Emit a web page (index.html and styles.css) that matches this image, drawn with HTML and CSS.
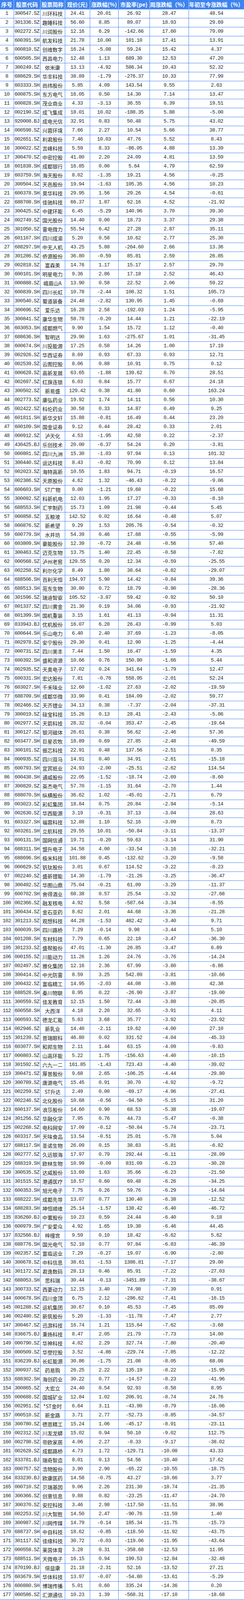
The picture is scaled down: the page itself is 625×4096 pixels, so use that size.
FILE: index.html
```html
<!DOCTYPE html>
<html lang="zh-CN">
<head>
<meta charset="utf-8">
<title>四川板块股票周涨跌幅</title>
<link rel="stylesheet" href="styles.css">
</head>
<body>
<table class="t">
<colgroup><col class="c1"><col class="c2"><col class="c3"><col class="c4"><col class="c5"><col class="c6"><col class="c7"><col class="c8"></colgroup>
<thead>
<tr class="hd"><th>序号</th><th>股票代码</th><th>股票简称</th><th>现价(元)</th><th>涨跌幅(%)</th><th>市盈率(pe)</th><th>周涨跌幅（%）</th><th>年初至今涨跌幅（%）</th></tr>
</thead>
<tbody>
<tr><td>1<td>300547.SZ<td class="n">川环科技<td>24.41<td>20.01<td>26.92<td>28.47<td>48.54
<tr><td>2<td>301336.SZ<td class="n">趣睡科技<td>56.60<td>8.85<td>89.07<td>18.93<td>29.69
<tr><td>3<td>002272.SZ<td class="n">川润股份<td>12.16<td>6.29<td>-142.66<td>17.60<td>79.09
<tr><td>4<td>600391.SH<td class="n">航发科技<td>21.78<td>10.00<td>101.10<td>17.41<td>13.91
<tr><td>5<td>000810.SZ<td class="n">创维数字<td>16.24<td>-5.08<td>59.24<td>15.42<td>4.37
<tr><td>6<td>600505.SH<td class="n">西昌电力<td>12.48<td>1.13<td>689.30<td>12.53<td>47.20
<tr><td>7<td>300249.SZ<td class="n">依米康<td>13.13<td>-4.92<td>586.34<td>10.43<td>52.32
<tr><td>8<td>688629.SH<td class="n">华丰科技<td>38.89<td>-1.79<td>-276.37<td>10.33<td>77.99
<tr><td>9<td>603333.SH<td class="n">尚纬股份<td>5.85<td>4.09<td>143.54<td>9.55<td>2.63
<tr><td>10<td>600875.SH<td class="n">东方电气<td>16.05<td>0.50<td>14.30<td>7.14<td>13.47
<tr><td>11<td>600828.SH<td class="n">茂业商业<td>4.33<td>-3.13<td>36.55<td>6.39<td>19.51
<tr><td>12<td>002190.SZ<td class="n">成飞集成<td>18.01<td>10.02<td>-188.35<td>5.88<td>-5.00
<tr><td>13<td>920008.BJ<td class="n">成电光信<td>32.91<td>0.83<td>50.48<td>5.75<td>43.02
<tr><td>14<td>000598.SZ<td class="n">兴蓉环境<td>7.66<td>2.27<td>10.54<td>5.66<td>38.77
<tr><td>15<td>002651.SZ<td class="n">利君股份<td>7.46<td>10.03<td>47.76<td>5.52<td>8.43
<tr><td>16<td>300022.SZ<td class="n">吉峰科技<td>5.59<td>8.33<td>-86.05<td>4.88<td>13.39
<tr><td>17<td>300470.SZ<td class="n">中密控股<td>41.80<td>2.20<td>24.09<td>4.81<td>13.59
<tr><td>18<td>601838.SH<td class="n">成都银行<td>16.85<td>0.00<td>5.64<td>4.79<td>62.59
<tr><td>19<td>603759.SH<td class="n">海天股份<td>8.02<td>-1.35<td>19.21<td>4.56<td>-0.25
<tr><td>20<td>300504.SZ<td class="n">天邑股份<td>19.94<td>-1.63<td>105.35<td>4.56<td>10.23
<tr><td>21<td>600378.SH<td class="n">昊华科技<td>29.95<td>1.56<td>29.26<td>4.54<td>-0.61
<tr><td>22<td>688708.SH<td class="n">佳驰科技<td>66.37<td>1.87<td>62.16<td>4.52<td>-21.92
<tr><td>23<td>300425.SZ<td class="n">中建环能<td>6.45<td>-5.29<td>140.96<td>3.70<td>39.30
<tr><td>24<td>002749.SZ<td class="n">国光股份<td>14.40<td>0.00<td>18.73<td>3.37<td>29.38
<tr><td>25<td>301050.SZ<td class="n">雷电微力<td>55.54<td>6.42<td>27.28<td>2.87<td>35.11
<tr><td>26<td>601107.SH<td class="n">四川成渝<td>5.20<td>0.58<td>10.62<td>2.77<td>25.30
<tr><td>27<td>688297.SH<td class="n">中无人机<td>43.25<td>5.88<td>-264.60<td>2.66<td>13.36
<tr><td>28<td>301286.SZ<td class="n">侨源股份<td>36.80<td>-0.59<td>85.81<td>2.59<td>26.85
<tr><td>29<td>002818.SZ<td class="n">富森美<td>14.76<td>1.17<td>15.17<td>2.57<td>29.70
<tr><td>30<td>600101.SH<td class="n">明星电力<td>9.36<td>2.86<td>17.18<td>2.52<td>46.43
<tr><td>31<td>000888.SZ<td class="n">峨眉山A<td>13.90<td>0.58<td>22.52<td>2.06<td>59.22
<tr><td>32<td>600839.SH<td class="n">四川长虹<td>10.78<td>-2.44<td>108.32<td>1.51<td>105.73
<tr><td>33<td>300540.SZ<td class="n">蜀道装备<td>24.48<td>-2.82<td>130.95<td>1.45<td>-0.69
<tr><td>34<td>300696.SZ<td class="n">爱乐达<td>16.28<td>2.58<td>-192.03<td>1.24<td>-5.95
<tr><td>35<td>300841.SZ<td class="n">康华生物<td>58.78<td>-0.20<td>14.44<td>1.21<td>-22.19
<tr><td>36<td>603053.SH<td class="n">成都燃气<td>9.90<td>1.54<td>15.72<td>1.12<td>-0.40
<tr><td>37<td>688636.SH<td class="n">智明达<td>29.90<td>1.63<td>-275.67<td>1.01<td>-31.45
<tr><td>38<td>600674.SH<td class="n">川投能源<td>17.25<td>0.58<td>14.26<td>1.00<td>17.19
<tr><td>39<td>002926.SZ<td class="n">华西证券<td>8.69<td>0.93<td>67.33<td>0.93<td>12.71
<tr><td>40<td>002539.SZ<td class="n">云图控股<td>8.06<td>0.88<td>10.91<td>0.75<td>0.12
<tr><td>41<td>000628.SZ<td class="n">高新发展<td>63.65<td>-1.88<td>139.62<td>0.70<td>28.51
<tr><td>42<td>002697.SZ<td class="n">红旗连锁<td>6.03<td>0.84<td>15.77<td>0.67<td>24.18
<tr><td>43<td>300502.SZ<td class="n">新易盛<td>129.42<td>0.38<td>41.80<td>0.60<td>163.24
<tr><td>44<td>002773.SZ<td class="n">康弘药业<td>19.92<td>1.74<td>14.11<td>0.56<td>10.30
<tr><td>45<td>002422.SZ<td class="n">科伦药业<td>30.58<td>0.33<td>14.87<td>0.49<td>9.25
<tr><td>46<td>601811.SH<td class="n">新华文轩<td>15.88<td>-0.81<td>16.49<td>0.44<td>23.20
<tr><td>47<td>600109.SH<td class="n">国金证券<td>9.12<td>0.44<td>28.42<td>0.33<td>2.01
<tr><td>48<td>000912.SZ<td class="n">泸天化<td>4.53<td>-1.95<td>42.58<td>0.22<td>-2.37
<tr><td>49<td>430425.BJ<td class="n">乐创技术<td>20.00<td>-6.37<td>54.24<td>0.20<td>-3.81
<tr><td>50<td>000801.SZ<td class="n">四川九洲<td>15.30<td>-1.03<td>97.94<td>0.13<td>101.32
<tr><td>51<td>300440.SZ<td class="n">运达科技<td>8.43<td>-0.82<td>70.99<td>0.12<td>13.84
<tr><td>52<td>002023.SZ<td class="n">海特高新<td>10.55<td>1.83<td>94.71<td>-0.19<td>16.57
<tr><td>53<td>002386.SZ<td class="n">天原股份<td>4.62<td>1.32<td>-46.43<td>-0.22<td>-9.06
<tr><td>54<td>600603.SH<td class="n">ST广物<td>9.00<td>-1.21<td>19.68<td>-0.22<td>15.68
<tr><td>55<td>300092.SZ<td class="n">科新机电<td>12.03<td>1.95<td>17.27<td>-0.33<td>-8.10
<tr><td>56<td>688553.SH<td class="n">汇宇制药<td>15.73<td>1.09<td>21.98<td>-0.44<td>5.45
<tr><td>57<td>000858.SZ<td class="n">五粮液<td>142.52<td>0.02<td>16.64<td>-0.48<td>5.07
<tr><td>58<td>000876.SZ<td class="n">新希望<td>9.29<td>1.53<td>205.76<td>-0.54<td>-0.32
<tr><td>59<td>600779.SH<td class="n">水井坊<td>54.39<td>0.46<td>17.68<td>-0.55<td>-5.99
<tr><td>60<td>603809.SH<td class="n">豪能股份<td>12.39<td>-0.72<td>24.48<td>-0.56<td>57.40
<tr><td>61<td>300463.SZ<td class="n">迈克生物<td>13.75<td>1.40<td>22.45<td>-0.58<td>-7.82
<tr><td>62<td>000568.SZ<td class="n">泸州老窖<td>129.55<td>0.20<td>12.34<td>-0.59<td>-25.55
<tr><td>63<td>002258.SZ<td class="n">利尔化学<td>8.49<td>1.80<td>38.64<td>-0.82<td>-29.07
<tr><td>64<td>688506.SH<td class="n">百利天恒<td>194.97<td>5.90<td>14.42<td>-0.84<td>39.36
<tr><td>65<td>688513.SH<td class="n">苑东生物<td>30.80<td>0.72<td>18.79<td>-0.90<td>-28.36
<tr><td>66<td>301596.SZ<td class="n">瑞迪智驱<td>105.52<td>-3.87<td>59.42<td>-0.92<td>50.10
<tr><td>67<td>001337.SZ<td class="n">四川黄金<td>21.30<td>0.19<td>34.06<td>-0.93<td>-21.92
<tr><td>68<td>601399.SH<td class="n">国机重装<td>3.15<td>1.61<td>41.13<td>-0.94<td>11.31
<tr><td>69<td>833943.BJ<td class="n">优机股份<td>16.07<td>6.28<td>26.43<td>-0.99<td>5.03
<tr><td>70<td>600644.SH<td class="n">乐山电力<td>6.40<td>2.40<td>37.69<td>-1.23<td>-8.05
<tr><td>71<td>002978.SZ<td class="n">安宁股份<td>29.30<td>0.41<td>12.90<td>-1.25<td>-4.44
<tr><td>72<td>000731.SZ<td class="n">四川美丰<td>7.44<td>1.50<td>16.47<td>-1.59<td>4.35
<tr><td>73<td>600392.SH<td class="n">盛和资源<td>10.66<td>0.76<td>150.90<td>-1.66<td>5.44
<tr><td>74<td>002935.SZ<td class="n">天奥电子<td>17.02<td>0.24<td>341.64<td>-1.79<td>12.47
<tr><td>75<td>600331.SH<td class="n">宏达股份<td>7.81<td>-0.76<td>558.95<td>-2.01<td>52.24
<tr><td>76<td>603027.SH<td class="n">千禾味业<td>12.60<td>-1.02<td>27.63<td>-2.02<td>-19.59
<tr><td>77<td>688709.SH<td class="n">成都华微<td>33.90<td>0.41<td>184.09<td>-2.02<td>59.77
<tr><td>78<td>002466.SZ<td class="n">天齐锂业<td>34.13<td>0.38<td>-7.37<td>-2.04<td>-37.31
<tr><td>79<td>300019.SZ<td class="n">硅宝科技<td>15.26<td>0.13<td>28.41<td>-2.43<td>-5.86
<tr><td>80<td>002977.SZ<td class="n">天箭科技<td>28.32<td>-0.04<td>353.47<td>-2.45<td>-19.64
<tr><td>81<td>300127.SZ<td class="n">银河磁体<td>26.61<td>0.38<td>56.62<td>-2.46<td>57.36
<tr><td>82<td>603477.SH<td class="n">巨星农牧<td>18.89<td>0.69<td>27.85<td>-2.48<td>-49.59
<tr><td>83<td>300101.SZ<td class="n">振芯科技<td>22.91<td>0.48<td>137.56<td>-2.51<td>0.35
<tr><td>84<td>000935.SZ<td class="n">四川双马<td>14.91<td>0.40<td>34.91<td>-2.61<td>-15.18
<tr><td>85<td>600793.SH<td class="n">宜宾纸业<td>24.93<td>-2.00<td>-25.51<td>-2.62<td>114.54
<tr><td>86<td>600438.SH<td class="n">通威股份<td>22.05<td>-1.52<td>-18.74<td>-2.69<td>-8.60
<tr><td>87<td>300820.SZ<td class="n">英杰电气<td>57.70<td>-1.15<td>31.64<td>-2.70<td>1.44
<tr><td>88<td>688070.SH<td class="n">纵横股份<td>36.62<td>1.02<td>-45.01<td>-2.71<td>6.79
<tr><td>89<td>003023.SZ<td class="n">彩虹集团<td>18.84<td>0.75<td>20.84<td>-2.94<td>-5.14
<tr><td>90<td>002630.SZ<td class="n">华西能源<td>3.19<td>-0.31<td>37.13<td>-3.04<td>28.63
<tr><td>91<td>603327.SH<td class="n">福蓉科技<td>12.88<td>1.10<td>52.16<td>-3.09<td>8.73
<tr><td>92<td>603261.SH<td class="n">立航科技<td>29.55<td>10.01<td>-50.84<td>-3.11<td>-13.37
<tr><td>93<td>600131.SH<td class="n">国网信通<td>19.71<td>-0.20<td>59.63<td>-3.14<td>31.90
<tr><td>94<td>688311.SH<td class="n">盟升电子<td>34.58<td>4.00<td>-33.54<td>-3.16<td>-32.21
<tr><td>95<td>688696.SH<td class="n">极米科技<td>101.88<td>0.45<td>-132.62<td>-3.20<td>-9.58
<tr><td>96<td>000629.SZ<td class="n">钒钛股份<td>3.01<td>0.67<td>114.52<td>-3.22<td>-8.23
<tr><td>97<td>002240.SZ<td class="n">盛新锂能<td>14.30<td>-1.79<td>-21.26<td>-3.25<td>-36.47
<tr><td>98<td>300492.SZ<td class="n">华图山鼎<td>75.04<td>-0.21<td>61.09<td>-3.29<td>-11.37
<tr><td>99<td>600702.SH<td class="n">舍得酒业<td>68.38<td>0.57<td>25.54<td>-3.32<td>-27.68
<tr><td>100<td>002366.SZ<td class="n">融发核电<td>4.92<td>5.58<td>-587.64<td>-3.34<td>-8.55
<tr><td>101<td>300434.SZ<td class="n">金石亚药<td>8.62<td>2.01<td>44.68<td>-3.36<td>-21.28
<tr><td>102<td>301213.SZ<td class="n">观想科技<td>44.28<td>-1.53<td>482.42<td>-3.40<td>9.71
<tr><td>103<td>600039.SH<td class="n">四川路桥<td>7.29<td>-0.14<td>9.98<td>-3.44<td>5.10
<tr><td>104<td>601208.SH<td class="n">东材科技<td>7.79<td>0.65<td>22.18<td>-3.47<td>-36.30
<tr><td>105<td>301233.SZ<td class="n">盛帮股份<td>47.01<td>-1.30<td>26.85<td>-3.47<td>6.89
<tr><td>106<td>000155.SZ<td class="n">川能动力<td>11.26<td>1.26<td>24.76<td>-3.76<td>-14.24
<tr><td>107<td>002497.SZ<td class="n">雅化集团<td>12.16<td>2.36<td>67.99<td>-3.80<td>-6.86
<tr><td>108<td>300414.SZ<td class="n">中光防雷<td>8.59<td>3.25<td>542.89<td>-3.81<td>-10.66
<tr><td>109<td>300432.SZ<td class="n">富临精工<td>14.95<td>-2.03<td>44.08<td>-3.86<td>42.38
<tr><td>110<td>688528.SH<td class="n">秦川物联<td>8.95<td>0.22<td>-26.90<td>-3.87<td>-19.00
<tr><td>111<td>300559.SZ<td class="n">佳发教育<td>12.15<td>1.50<td>72.44<td>-3.88<td>-20.85
<tr><td>112<td>600558.SH<td class="n">大西洋<td>4.18<td>2.20<td>32.65<td>-3.91<td>4.11
<tr><td>113<td>000593.SZ<td class="n">德龙汇能<td>5.63<td>3.68<td>35.77<td>-3.92<td>-23.92
<tr><td>114<td>002946.SZ<td class="n">新乳业<td>14.40<td>-2.11<td>19.62<td>-4.00<td>27.10
<tr><td>115<td>301239.SZ<td class="n">普瑞眼科<td>46.80<td>0.02<td>331.52<td>-4.04<td>-45.33
<tr><td>116<td>603077.SH<td class="n">和邦生物<td>2.11<td>1.44<td>63.15<td>-4.09<td>-9.83
<tr><td>117<td>000803.SZ<td class="n">山高环能<td>5.22<td>1.75<td>-156.63<td>-4.40<td>-10.15
<tr><td>118<td>301592.SZ<td class="n">六九一二<td>161.85<td>-1.43<td>723.43<td>-4.40<td>-39.02
<tr><td>119<td>300471.SZ<td class="n">厚普股份<td>9.68<td>2.65<td>-106.25<td>-4.44<td>-29.80
<tr><td>120<td>300789.SZ<td class="n">唐源电气<td>15.45<td>0.91<td>30.70<td>-4.92<td>-9.72
<tr><td>121<td>002259.SZ<td class="n">ST升达<td>2.49<td>0.00<td>-69.17<td>-4.96<td>-27.41
<tr><td>122<td>002246.SZ<td class="n">北化股份<td>10.68<td>-0.56<td>-94.50<td>-5.15<td>31.20
<tr><td>123<td>600137.SH<td class="n">浪莎股份<td>14.60<td>0.90<td>68.53<td>-5.38<td>-19.07
<tr><td>124<td>301256.SZ<td class="n">华融化学<td>7.95<td>0.76<td>44.73<td>-5.47<td>-0.38
<tr><td>125<td>002268.SZ<td class="n">电科网安<td>17.09<td>-0.12<td>-50.84<td>-5.74<td>-23.71
<tr><td>126<td>603317.SH<td class="n">天味食品<td>13.54<td>-0.51<td>25.01<td>-5.78<td>5.04
<tr><td>127<td>688117.SH<td class="n">圣诺生物<td>26.09<td>0.15<td>38.63<td>-5.81<td>-6.82
<tr><td>128<td>002777.SZ<td class="n">久远银海<td>17.97<td>0.79<td>292.44<td>-6.11<td>-28.09
<tr><td>129<td>688319.SH<td class="n">欧林生物<td>10.99<td>-0.09<td>831.09<td>-6.23<td>-30.28
<tr><td>130<td>300535.SZ<td class="n">达威股份<td>13.69<td>1.63<td>35.66<td>-6.23<td>-21.50
<tr><td>131<td>301515.SZ<td class="n">港通医疗<td>18.57<td>0.60<td>69.48<td>-6.26<td>-34.25
<tr><td>132<td>600353.SH<td class="n">旭光电子<td>7.75<td>0.26<td>59.76<td>-6.29<td>-14.84
<tr><td>133<td>688222.SH<td class="n">成都先导<td>13.07<td>0.77<td>130.40<td>-6.38<td>-12.52
<tr><td>134<td>688283.SH<td class="n">坤恒顺维<td>25.14<td>-1.57<td>138.42<td>-6.40<td>-46.72
<tr><td>135<td>836260.BJ<td class="n">中寰股份<td>10.23<td>0.59<td>24.44<td>-6.40<td>9.18
<tr><td>136<td>600979.SH<td class="n">广安爱众<td>4.92<td>1.65<td>19.38<td>-6.46<td>44.45
<tr><td>137<td>832566.BJ<td class="n">梓橦宫<td>9.59<td>0.10<td>18.42<td>-6.62<td>5.62
<tr><td>138<td>688776.SH<td class="n">国光电气<td>52.10<td>0.77<td>97.84<td>-6.83<td>-46.39
<tr><td>139<td>002357.SZ<td class="n">富临运业<td>7.29<td>-0.27<td>19.07<td>-6.90<td>-2.80
<tr><td>140<td>300678.SZ<td class="n">中科信息<td>38.61<td>-1.53<td>1386.81<td>-7.17<td>29.00
<tr><td>141<td>301172.SZ<td class="n">君逸数码<td>28.13<td>0.46<td>85.91<td>-7.22<td>-27.03
<tr><td>142<td>688053.SH<td class="n">思科瑞<td>30.44<td>-0.13<td>-3451.89<td>-7.31<td>-38.67
<tr><td>143<td>300733.SZ<td class="n">西菱动力<td>12.15<td>3.40<td>74.98<td>-7.39<td>0.91
<tr><td>144<td>600678.SH<td class="n">四川金顶<td>6.75<td>2.12<td>-286.62<td>-7.41<td>-16.15
<tr><td>145<td>001288.SZ<td class="n">运机集团<td>30.67<td>0.10<td>45.53<td>-7.45<td>85.09
<tr><td>146<td>002480.SZ<td class="n">新筑股份<td>5.20<td>-1.33<td>-11.78<td>-7.47<td>2.77
<tr><td>147<td>300467.SZ<td class="n">迅游科技<td>16.74<td>1.21<td>115.64<td>-7.62<td>-3.68
<tr><td>148<td>836675.BJ<td class="n">秉扬科技<td>8.47<td>2.05<td>21.79<td>-7.73<td>14.00
<tr><td>149<td>000790.SZ<td class="n">华神科技<td>4.02<td>2.29<td>327.74<td>-7.80<td>-20.40
<tr><td>150<td>000509.SZ<td class="n">华塑控股<td>3.52<td>-4.86<td>-229.74<td>-7.85<td>-12.22
<tr><td>151<td>836239.BJ<td class="n">长虹能源<td>30.86<td>-1.75<td>21.08<td>-8.05<td>68.08
<tr><td>152<td>300937.SZ<td class="n">药易购<td>26.25<td>2.22<td>135.19<td>-8.22<td>-15.95
<tr><td>153<td>688302.SH<td class="n">海创药业<td>30.22<td>0.77<td>-14.57<td>-8.23<td>-41.96
<tr><td>154<td>300865.SZ<td class="n">大宏立<td>24.40<td>0.54<td>92.93<td>-8.58<td>8.95
<tr><td>155<td>000688.SZ<td class="n">国城矿业<td>12.84<td>1.02<td>206.91<td>-8.74<td>24.76
<tr><td>156<td>002951.SZ<td class="n">*ST金时<td>6.64<td>3.11<td>-43.98<td>-8.79<td>-16.06
<tr><td>157<td>000510.SZ<td class="n">新金路<td>3.71<td>2.77<td>-52.73<td>-8.85<td>-34.57
<tr><td>158<td>300780.SZ<td class="n">德恩精工<td>15.24<td>1.06<td>-45.17<td>-8.91<td>-23.11
<tr><td>159<td>002312.SZ<td class="n">川发龙蟒<td>15.02<td>0.94<td>50.10<td>-9.02<td>112.75
<tr><td>160<td>002798.SZ<td class="n">帝欧家居<td>4.06<td>2.27<td>-8.33<td>-9.17<td>-38.02
<tr><td>161<td>002628.SZ<td class="n">成都路桥<td>4.73<td>1.72<td>-129.71<td>-10.08<td>43.33
<tr><td>162<td>833781.BJ<td class="n">瑞奇智造<td>8.01<td>0.13<td>54.56<td>-10.40<td>17.62
<tr><td>163<td>000757.SZ<td class="n">浩物股份<td>3.90<td>2.90<td>-65.22<td>-10.55<td>-18.75
<tr><td>164<td>833230.BJ<td class="n">欧康医药<td>14.58<td>-0.75<td>43.27<td>-10.66<td>3.77
<tr><td>165<td>000710.SZ<td class="n">贝瑞基因<td>9.06<td>2.26<td>231.30<td>-10.74<td>-21.35
<tr><td>166<td>300366.SZ<td class="n">创意信息<td>9.88<td>0.82<td>-23.25<td>-11.47<td>-24.70
<tr><td>167<td>300370.SZ<td class="n">安控科技<td>3.46<td>2.98<td>-117.50<td>-11.51<td>38.96
<tr><td>168<td>002253.SZ<td class="n">川大智胜<td>14.50<td>2.47<td>-90.76<td>-11.59<td>1.40
<tr><td>169<td>300987.SZ<td class="n">川网传媒<td>14.79<td>-0.14<td>185.34<td>-11.75<td>-15.73
<tr><td>170<td>688737.SH<td class="n">中自科技<td>18.62<td>-0.85<td>-118.50<td>-11.92<td>-43.75
<tr><td>171<td>301117.SZ<td class="n">佳缘科技<td>30.72<td>-0.03<td>-119.06<td>-11.95<td>-43.64
<tr><td>172<td>000558.SZ<td class="n">莱茵体育<td>3.28<td>0.31<td>-358.68<td>-12.53<td>11.95
<tr><td>173<td>688511.SH<td class="n">天微电子<td>16.15<td>0.94<td>199.53<td>-12.84<td>-32.48
<tr><td>174<td>870199.BJ<td class="n">倍益康<td>21.18<td>-2.31<td>52.16<td>-13.52<td>27.21
<tr><td>175<td>603679.SH<td class="n">华体科技<td>13.97<td>-0.07<td>-54.80<td>-13.61<td>-5.29
<tr><td>176<td>600880.SH<td class="n">博瑞传播<td>5.01<td>0.60<td>335.24<td>-14.36<td>0.20
<tr><td>177<td>000586.SZ<td class="n">汇源通信<td>10.23<td>1.39<td>-568.31<td>-17.10<td>-18.68
</tbody>
</table>
</body>
</html>
```

FILE: styles.css
```css
html, body {
  margin: 0;
  padding: 0;
  background: #ffffff;
}

.t {
  width: 625px;
  border-collapse: collapse;
  table-layout: fixed;
  font-family: "Liberation Mono", "DejaVu Sans Mono", monospace;
  font-size: 13px;
  letter-spacing: -0.75px;
  color: #2b2b2b;
}

.c1 { width: 35px; }
.c2 { width: 68px; }
.c3 { width: 63px; }
.c4 { width: 64px; }
.c5 { width: 73px; }
.c6 { width: 80px; }
.c7 { width: 100px; }
.c8 { width: 142px; }

.t tr {
  height: 23px;
}

.t td {
  padding: 0;
  text-align: center;
  vertical-align: middle;
  line-height: 1;
  white-space: nowrap;
  overflow: hidden;
  border-right: 1px solid #4683ee;
  border-bottom: 1px solid #4683ee;
}

.t td.n {
  font-family: "Noto Sans CJK SC", sans-serif;
  font-size: 13px;
  letter-spacing: 0;
  color: #222222;
}

.hd th {
  padding: 0;
  background: #3e84f0;
  color: #ffffff;
  font-family: "Noto Sans CJK SC", sans-serif;
  font-weight: 700;
  font-size: 14px;
  letter-spacing: 0;
  line-height: 1;
  white-space: nowrap;
  overflow: hidden;
  text-align: center;
  vertical-align: middle;
  border-right: 1px solid #b9d1f8;
  border-bottom: 1px solid #4683ee;
}

.hd th:last-child {
  border-right: 1px solid #4683ee;
}
```
